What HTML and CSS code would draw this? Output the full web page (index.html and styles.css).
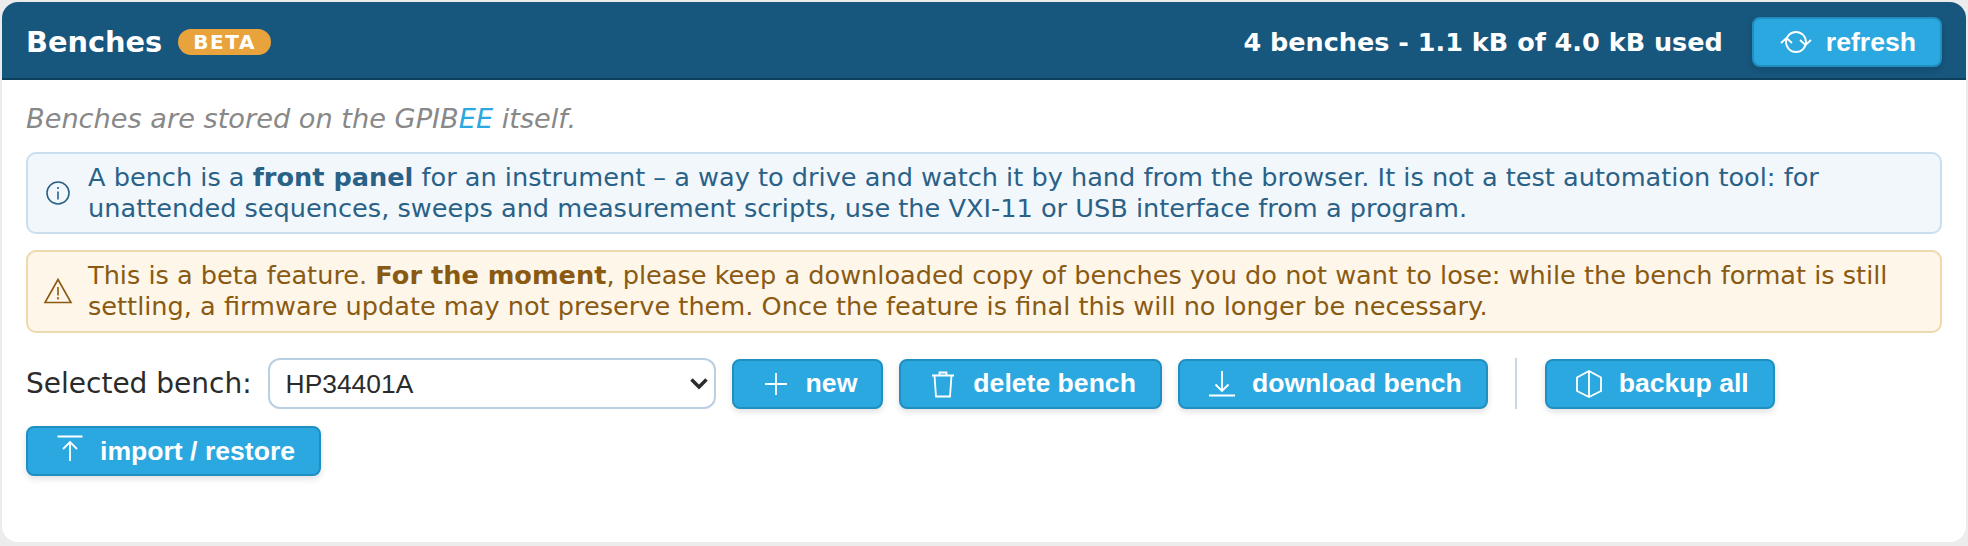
FILE: index.html
```html
<!DOCTYPE html>
<html lang="en">
  <head>
    <meta charset="UTF-8" />
    <meta name="viewport" content="width=device-width, initial-scale=1.0" />
    <title>Benches</title>
    <link rel="stylesheet" href="styles.css">
  </head>
  <body>
    <div class="card">
      <div class="card-header">
        <div class="card-title">
          <h2>Benches</h2>
          <span class="badge">BETA</span>
        </div>
        <div class="card-status">
          <span>4 benches - 1.1 kB of 4.0 kB used</span>
          <button class="btn">
            <svg class="icon" viewBox="0 0 36 24"><circle cx="18" cy="12" r="10"/><path d="M3 13l5.500-5 5.500 5M22 10l5.500 5 5.500-5"/></svg>
            refresh
          </button>
        </div>
      </div>
      <div class="card-body">
        <p class="hint">Benches are stored on the GPIB<span class="accent">EE</span> itself.</p>
        <div class="notice notice-info">
          <svg class="notice-icon" viewBox="0 0 24 24"><circle cx="12" cy="12" r="11"/><path d="M12 10.500v8M12 6v2"/></svg>
          <p>A bench is a <b>front panel</b> for an instrument – a way to drive and watch it by hand from the browser. It is not a test automation tool: for unattended sequences, sweeps and measurement scripts, use the VXI-11 or USB interface from a program.</p>
        </div>
        <div class="notice notice-warn">
          <svg class="notice-icon" viewBox="0 0 24 24"><path d="M12 .5 25 23.500H-1zM12 8v8.500M12 18v2.500"/></svg>
          <p>This is a beta feature. <b>For the moment</b>, please keep a downloaded copy of benches you do not want to lose: while the bench format is still settling, a firmware update may not preserve them. Once the feature is final this will no longer be necessary.</p>
        </div>
        <div class="toolbar">
          <label for="bench">Selected bench:</label>
          <select id="bench" class="bench-select">
            <option>HP34401A</option>
          </select>
          <button class="btn">
            <svg class="icon" viewBox="0 0 36 24"><path d="M18 1v22M7 12h22"/></svg>
            new
          </button>
          <button class="btn">
            <svg class="icon" viewBox="0 0 36 24"><path d="M7 3.500h22M14.500 3.500V.5h7v3M9.500 3.500 11 24.500h14l1.500-21"/></svg>
            delete bench
          </button>
          <button class="btn">
            <svg class="icon" viewBox="0 0 36 24"><path d="M18-1v20M11.500 12.500 18 19l6.500-6.500M5 23.500h26"/></svg>
            download bench
          </button>
          <span class="divider"></span>
          <button class="btn">
            <svg class="icon" viewBox="0 0 36 24"><path d="M18-1 30 5.500v13.500L18 25 6 19V5.500zM18-1v26"/></svg>
            backup all
          </button>
          <button class="btn">
            <svg class="icon" viewBox="0 0 36 24"><path d="M5.500-2.500h25M18 3v19M11 10l7-7 7 7"/></svg>
            import / restore
          </button>
        </div>
      </div>
    </div>
  </body>
</html>
```

FILE: styles.css
```css
html,
body {
  margin: 0;
  padding: 0;
  background: #ececec;
}

body {
  padding: 2px 2px 4px;
  font-family: "DejaVu Sans", sans-serif;
  font-size: 25.6px;
  color: #2b2b2b;
}

.card {
  height: 540px;
  box-sizing: border-box;
  background: #fff;
  border-radius: 16px;
  overflow: hidden;
}

.card-header {
  display: flex;
  justify-content: space-between;
  align-items: center;
  height: 78px;
  box-sizing: border-box;
  padding: 4px 24px 0;
  background: #17567d;
  border-bottom: 2px solid #0f3f5f;
  color: #fff;
}

.card-title {
  display: flex;
  align-items: center;
  gap: 16px;
}

.card-title h2 {
  margin: 0;
  font-size: 28.8px;
  font-weight: bold;
}

.badge {
  padding: 3px 15px;
  border-radius: 14px;
  background: #e8a33d;
  font-size: 20px;
  font-weight: bold;
  letter-spacing: 1.6px;
  line-height: 20px;
}

.card-status {
  display: flex;
  align-items: center;
  gap: 29px;
  font-size: 25.5px;
  font-weight: bold;
}

.card-body {
  padding: 22px 24px;
}

.hint {
  margin: 0 0 16px;
  font-size: 27.2px;
  font-style: italic;
  line-height: 34px;
  color: #888;
}

.accent {
  color: #2ca8e0;
}

.notice {
  display: flex;
  align-items: center;
  gap: 18px;
  margin-bottom: 16px;
  padding: 8px 18px;
  border: 2px solid;
  border-radius: 10px;
  line-height: 31px;
}

.notice p {
  margin: 0;
}

.notice-icon {
  flex: none;
  width: 24px;
  height: 24px;
  fill: none;
  stroke: currentColor;
  stroke-width: 1.6;
  overflow: visible;
}

.notice-info {
  background: #f2f7fb;
  border-color: #c9dfef;
  color: #2a6187;
}

.notice-warn {
  padding-bottom: 9px;
  background: #fdf6e9;
  border-color: #ecd9ae;
  color: #8a5a12;
}

.toolbar {
  display: flex;
  flex-wrap: wrap;
  align-items: center;
  gap: 17px 16px;
  margin-top: 25px;
}

.toolbar label {
  font-size: 28px;
}

.bench-select {
  width: 448px;
  height: 51px;
  box-sizing: border-box;
  padding: 0 16px;
  appearance: none;
  background: #fff url("data:image/svg+xml,%3Csvg xmlns='http://www.w3.org/2000/svg' viewBox='0 0 18 13'%3E%3Cpath d='M1.500 2.500 9 10l7.500-7.500' fill='none' stroke='%232b2b2b' stroke-width='3.400'/%3E%3C/svg%3E") no-repeat right 6px center / 18px 13px;
  border: 2px solid #b9cfe2;
  border-radius: 12px;
  font-family: "Liberation Sans", sans-serif;
  font-size: 26.4px;
  color: #2b2b2b;
}

.btn {
  display: inline-flex;
  align-items: center;
  gap: 12px;
  height: 50px;
  box-sizing: border-box;
  padding: 0 24px;
  background: #2ca8e0;
  border: 2px solid #1f8fc2;
  border-radius: 8px;
  box-shadow: 0 3px 6px rgba(0, 0, 0, 0.12);
  font-family: "Liberation Sans", sans-serif;
  font-size: 26.6px;
  font-weight: bold;
  color: #fff;
}

.icon {
  flex: none;
  width: 36px;
  height: 24px;
  fill: none;
  stroke: #fff;
  stroke-width: 1.8;
  overflow: visible;
}

.divider {
  width: 2px;
  height: 51px;
  margin: 0 11.5px;
  background: #c8d6e8;
}
```
